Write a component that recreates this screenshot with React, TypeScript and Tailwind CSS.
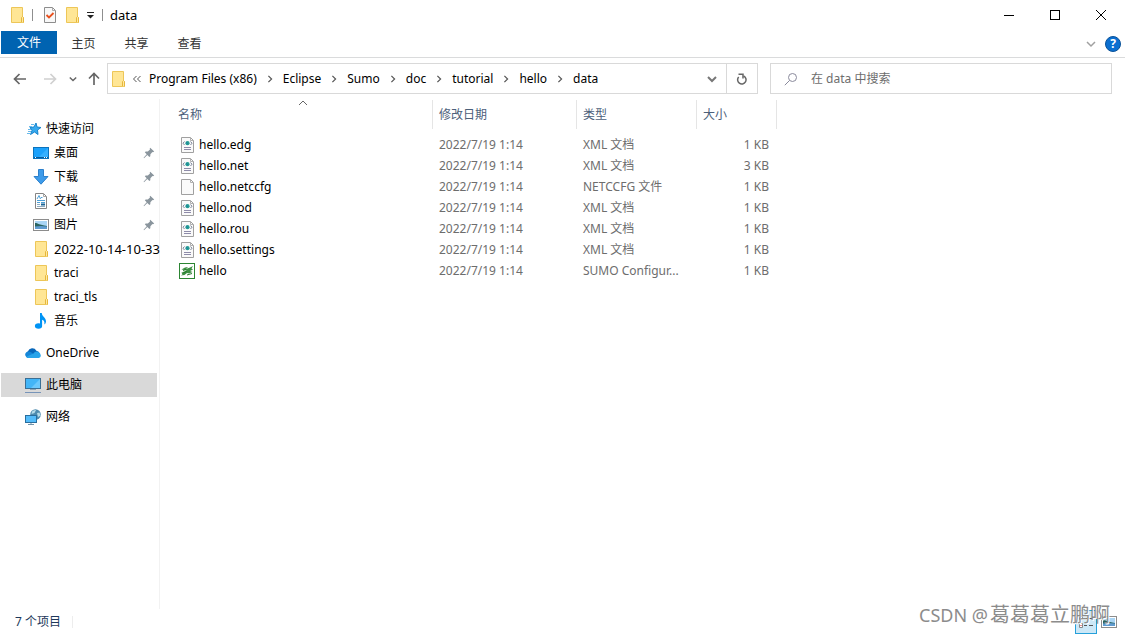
import type { ReactNode } from 'react'

interface FileItem {
  name: string
  icon: 'xml' | 'blank' | 'sumo'
  type: string
  size: string
}

interface NavItem {
  label: string
  icon: ReactNode
  pinned?: boolean
  wide?: boolean
}

const files: FileItem[] = [
  { name: 'hello.edg', icon: 'xml', type: 'XML 文档', size: '1 KB' },
  { name: 'hello.net', icon: 'xml', type: 'XML 文档', size: '3 KB' },
  { name: 'hello.netccfg', icon: 'blank', type: 'NETCCFG 文件', size: '1 KB' },
  { name: 'hello.nod', icon: 'xml', type: 'XML 文档', size: '1 KB' },
  { name: 'hello.rou', icon: 'xml', type: 'XML 文档', size: '1 KB' },
  { name: 'hello.settings', icon: 'xml', type: 'XML 文档', size: '1 KB' },
  { name: 'hello', icon: 'sumo', type: 'SUMO Configur...', size: '1 KB' }
]

const crumbs = ['Program Files (x86)', 'Eclipse', 'Sumo', 'doc', 'tutorial', 'hello', 'data']

function FolderIcon() {
  return (
    <svg width="16" height="16" viewBox="0 0 16 16" className="shrink-0">
      <path d="M2.5 .5H13.5V9.5L14.5 10.5V15.5H2.5Z" fill="#ffe695" stroke="#edc658" />
      <path d="M12.5 15V10.5L13.5 9.5L14.5 10.5V15.5" fill="#ffe9a2" stroke="#e6b73c" />
    </svg>
  )
}

function PropertiesIcon() {
  return (
    <svg width="14" height="16" viewBox="0 0 14 16">
      <path d="M1.5 .5H9.5L12.5 3.5V15.5H1.5Z" fill="#f8f8f8" stroke="#8d8d8d" />
      <path d="M9.5 .5V3.5H12.5" fill="none" stroke="#a9a9a9" />
      <path d="M3.5 8L6 10.5L10.5 6" fill="none" stroke="#e8501e" strokeWidth="1.8" />
    </svg>
  )
}

function StarIcon() {
  return (
    <svg width="16" height="16" viewBox="0 0 16 16" className="shrink-0">
      <path d="M10 2L11 6L15 6.5L11.5 9L12 13.5L8.5 11L4.5 13.5L6 9.5L4 6.5L8 6Z" fill="#36a9ee" stroke="#1784cd" />
      <path d="M5 3.5H8M3 5.5H6M2 8.5H5M2 10.5H5M1 12.5H4" stroke="#68b9ea" />
    </svg>
  )
}

function DesktopIcon() {
  return (
    <svg width="16" height="16" viewBox="0 0 16 16" className="shrink-0">
      <rect x=".5" y="2.5" width="15" height="11" fill="#1ba1fb" stroke="#0b73bd" />
      <path d="M15 3V12H6Z" fill="#35b0ff" />
      <path d="M1 12.5H15" stroke="#075b9b" />
      <path d="M2 12.5H3M11 12.5H12M13 12.5H14" stroke="#fff" />
    </svg>
  )
}

function DownloadIcon() {
  return (
    <svg width="16" height="16" viewBox="0 0 16 16" className="shrink-0">
      <path d="M5.5 .5H10.5V7.5H15L8 15.2L1 7.5H5.5Z" fill="#3d9bea" stroke="#2c80cc" />
    </svg>
  )
}

function DocumentIcon() {
  return (
    <svg width="16" height="16" viewBox="0 0 16 16" className="shrink-0">
      <path d="M2.5 .5H10.5L13.5 3.5V15.5H2.5Z" fill="#fff" stroke="#858585" />
      <path d="M10.5 .5V3.5H13.5" fill="none" stroke="#a5a5a5" />
      <path d="M4 6L6 2.5L7.5 6M8 4.5H9.5M4 7.5H12M8 9.5H12M4 9.5H7" fill="none" stroke="#4c9fd6" />
      <path d="M4 11.5H7M4 13.5H12" stroke="#8eabc0" />
      <path d="M8 11.5H12" stroke="#1d6495" strokeWidth="2" />
    </svg>
  )
}

function PictureIcon() {
  return (
    <svg width="16" height="16" viewBox="0 0 16 16" className="shrink-0">
      <rect x=".5" y="2.5" width="15" height="11" fill="#fff" stroke="#8c8c8c" />
      <rect x="2" y="4" width="12" height="8" fill="#a9d5f5" />
      <path d="M2 6C5 6 6 8 14 9V10H2Z" fill="#2b6460" />
      <path d="M2 9.5L8 9L14 9.5V12H2Z" fill="#5f9bd0" />
    </svg>
  )
}

function MusicIcon() {
  return (
    <svg width="16" height="16" viewBox="0 0 16 16" className="shrink-0">
      <ellipse cx="5.5" cy="13" rx="3.6" ry="2.7" fill="#0094f5" />
      <path d="M7 0H8.8C8.8 3.5 13.2 4.5 13 8.5C12.9 10 12.2 11 11.3 11.5C11.9 8.8 10.8 7.2 9.1 6.7V13H7Z" fill="#0094f5" />
    </svg>
  )
}

function OneDriveIcon() {
  return (
    <svg width="16" height="16" viewBox="0 0 16 16" className="shrink-0">
      <path d="M3.5 13A3.5 3.5 0 0 1 2.8 6.4A4.8 4.8 0 0 1 11.4 5.7A4 4 0 0 1 13 13Z" fill="#0867ba" />
      <path d="M3.5 13A3.5 3.5 0 0 1 .5 8.2C2 6 4.5 6.1 6 7.2L14 12.5Z" fill="#1586d8" />
      <path d="M1.2 11.8L8.5 8.4A4 4 0 0 1 15.8 10.2A2.8 2.8 0 0 1 13.2 13H3.5Q2 13 1.2 11.8Z" fill="#28a4ea" />
    </svg>
  )
}

function ComputerIcon() {
  return (
    <svg width="16" height="16" viewBox="0 0 16 16" className="shrink-0">
      <rect x=".5" y="1.5" width="15" height="10" fill="#43b5f7" stroke="#3a6f95" />
      <path d="M15 2V11H6Z" fill="#6cc8fc" />
      <path d="M5 12.5H11" stroke="#8fa5b7" />
      <path d="M0 15.5H16" stroke="#7794b8" />
    </svg>
  )
}

function NetworkIcon() {
  return (
    <svg width="16" height="16" viewBox="0 0 16 16" className="shrink-0">
      <circle cx="10.5" cy="5.5" r="5.3" fill="#4f8caf" />
      <path d="M7 2.5Q9 .5 11 1L9.5 4L6.5 5ZM12 4L14.5 3.5L15.5 6.5L13 8Z" fill="#b6dce9" />
      <rect x=".5" y="6.5" width="11" height="7" fill="#54bcfa" stroke="#296e9e" />
      <path d="M6 14V15M3 15.5H9" stroke="#7293aa" />
    </svg>
  )
}

function PinIcon() {
  return (
    <svg width="12" height="12" viewBox="0 0 12 12" className="shrink-0">
      <path d="M7.2 .8L11.2 4.6L10 5.3L9.4 5.1L7.4 7.3L7.3 9.2L6.4 10L4.3 7.9L1 11.2L.6 10.8L3.7 7.2L1.8 5.3L2.7 4.5L4.8 4.6L7 2.5L6.7 1.8Z" fill="#8a959d" />
    </svg>
  )
}

function FileIcon({ kind }: { kind: FileItem['icon'] }) {
  if (kind === 'sumo') {
    return (
      <svg width="16" height="16" viewBox="0 0 16 16" className="shrink-0">
        <rect x=".5" y=".5" width="15" height="15" fill="#fff" stroke="#2c8533" />
        <path d="M2.5 6.5L6 4.5L9 4L7 6L11 4.5L14 3L12.5 5.5L14 6.5L11 8L13.5 9L10 10.5L8 10L5.5 12L2 12.5L4.5 10.5L2 10L5 8.5L8 7.5Z" fill="#3d8f43" />
        <path d="M3 11L8 8M8 12L13 10.5M4 7.5L7 6.5" stroke="#267c2b" />
      </svg>
    )
  }
  return (
    <svg width="16" height="16" viewBox="0 0 16 16" className="shrink-0">
      <path d="M2.5 .5H11.5L14.5 3.5V15.5H2.5Z" fill="#fafafa" stroke="#a0a0a0" />
      <path d="M11.5 .5V3.5H14.5" fill="none" stroke="#b0b0b0" />
      {kind === 'xml' && (
        <>
          <path d="M5.5 4.5L4 6.2L5.5 8M11.5 4.5L13 6.2L11.5 8" fill="none" stroke="#7b8498" />
          <circle cx="8.5" cy="6.2" r="2.1" fill="#249e94" />
          <path d="M7.5 5.5L8.5 6.5" fill="none" stroke="#195bab" />
          <path d="M5 10.5H12M5 12.5H12" stroke="#8e8ba9" />
        </>
      )}
    </svg>
  )
}

function Chevron({ className, strokeWidth = 1.5 }: { className: string; strokeWidth?: number }) {
  return (
    <svg width="10" height="10" viewBox="0 0 10 10" className={className} fill="none" stroke="currentColor" strokeWidth={strokeWidth}>
      <path d="M1 3L5 7L9 3" />
    </svg>
  )
}

function ArrowIcon({ className }: { className: string }) {
  return (
    <svg width="14" height="14" viewBox="0 0 14 14" className={className} fill="none" stroke="currentColor" strokeWidth="1.7">
      <path d="M13 7H2M6.5 2L1.5 7L6.5 12" />
    </svg>
  )
}

const quickAccess: NavItem[] = [
  { label: '桌面', icon: <DesktopIcon />, pinned: true },
  { label: '下载', icon: <DownloadIcon />, pinned: true },
  { label: '文档', icon: <DocumentIcon />, pinned: true },
  { label: '图片', icon: <PictureIcon />, pinned: true },
  { label: '2022-10-14-10-33', icon: <FolderIcon />, wide: true },
  { label: 'traci', icon: <FolderIcon /> },
  { label: 'traci_tls', icon: <FolderIcon /> },
  { label: '音乐', icon: <MusicIcon /> }
]

function TitleBar() {
  return (
    <header className="flex h-[30px] items-center pl-[9px]">
      <FolderIcon />
      <span className="ml-[7px] mr-[10px] h-3 w-px bg-[#8f8f8f]" />
      <button aria-label="属性"><PropertiesIcon /></button>
      <button aria-label="新建文件夹" className="ml-[7px]"><FolderIcon /></button>
      <button aria-label="自定义快速访问工具栏" className="ml-[6px]">
        <svg width="9" height="8" viewBox="0 0 9 8">
          <path d="M1 1.5H8" stroke="#222" />
          <path d="M1 4H8L4.5 7.5Z" fill="#222" />
        </svg>
      </button>
      <span className="ml-[7px] h-3 w-px bg-[#8f8f8f]" />
      <h1 className="ml-[7px] text-[13px]">data</h1>
      <div className="ml-auto flex h-full">
        <button aria-label="最小化" className="flex w-[46px] items-center justify-center">
          <svg width="10" height="10"><path d="M0 5.5H10" stroke="#000" /></svg>
        </button>
        <button aria-label="最大化" className="flex w-[45px] items-center justify-center">
          <svg width="10" height="10"><rect x=".5" y=".5" width="9" height="9" fill="none" stroke="#000" /></svg>
        </button>
        <button aria-label="关闭" className="flex w-12 items-center justify-center">
          <svg width="10" height="10"><path d="M0 0L10 10M10 0L0 10" stroke="#000" /></svg>
        </button>
      </div>
    </header>
  )
}

function Ribbon() {
  return (
    <nav className="flex h-7 items-start border-b border-[#dadbdc] pl-px pt-px text-[#333]">
      <button className="h-[23px] w-14 bg-[#0063b1] text-white">文件</button>
      {['主页', '共享', '查看'].map((tab) => (
        <button key={tab} className="h-[26px] w-[53px]">{tab}</button>
      ))}
      <div className="ml-auto flex h-[26px] items-center gap-[9px] pr-1">
        <button aria-label="展开功能区"><Chevron className="text-[#a0a0a0]" /></button>
        <button aria-label="帮助" className="flex size-4 items-center justify-center rounded-full border border-[#0a5299] bg-[#0b6fd0] text-[12px] font-bold text-white">?</button>
      </div>
    </nav>
  )
}

function AddressBar() {
  return (
    <div className="flex h-[41px] items-center pr-[13px] text-[#666]">
      <button aria-label="后退" className="ml-[13px]"><ArrowIcon className="" /></button>
      <button aria-label="前进" className="ml-4"><ArrowIcon className="rotate-180 text-[#d0d0d0]" /></button>
      <button aria-label="最近位置" className="ml-3"><Chevron className="size-2" strokeWidth={1.8} /></button>
      <button aria-label="上移" className="ml-[10px]"><ArrowIcon className="rotate-90" /></button>
      <div className="ml-[6px] flex h-[31px] min-w-0 flex-1 items-center border border-[#d9d9d9] text-black">
        <span className="ml-[2px]"><FolderIcon /></span>
        <svg width="10" height="8" viewBox="0 0 10 8" className="mx-[6px] mr-[7px] shrink-0" fill="none" stroke="#555">
          <path d="M4.5 1L1.5 4L4.5 7M8.5 1L5.5 4L8.5 7" />
        </svg>
        <ol className="flex min-w-0 items-center whitespace-nowrap">
          {crumbs.map((crumb, i) => (
            <li key={crumb} className="flex items-center">
              {i > 0 && (
                <span className="flex w-[26px] justify-center">
                  <Chevron className="size-2 -rotate-90 text-[#555]" />
                </span>
              )}
              <button>{crumb}</button>
            </li>
          ))}
        </ol>
        <button aria-label="以前的位置" className="ml-auto mr-[9px]"><Chevron className="text-[#777]" strokeWidth={2} /></button>
        <button aria-label="刷新" className="flex h-full w-[31px] items-center justify-center border-l border-[#d9d9d9]">
          <svg width="12" height="12" viewBox="0 0 12 12" fill="none" stroke="#666" strokeWidth="1.5">
            <path d="M2.7 4A4.2 4.2 0 1 0 7.6 3" />
            <path d="M2.5 1.2H7V5.5" />
          </svg>
        </button>
      </div>
      <label className="ml-3 flex h-[31px] w-[342px] items-center border border-[#d9d9d9]">
        <svg width="14" height="14" viewBox="0 0 14 14" className="ml-[13px]" fill="none" stroke="#8a8a9c">
          <circle cx="8.5" cy="5.5" r="4" />
          <path d="M5.5 8.5L.8 13.2" />
        </svg>
        <input type="text" aria-label="搜索" placeholder="在 data 中搜索" className="ml-[13px] min-w-0 flex-1 outline-none placeholder:text-[#6d6d6d]" />
      </label>
    </div>
  )
}

function Sidebar() {
  return (
    <aside className="flex w-40 shrink-0 flex-col gap-2 border-r border-[#f2f2f2] pl-px pt-[18px]">
      <div>
        <a href="#quick" className="flex h-6 items-center pl-[25px]">
          <StarIcon />
          <span className="ml-1">快速访问</span>
        </a>
        <ul>
          {quickAccess.map((item) => (
            <li key={item.label}>
              <a href="#folder" className="flex h-6 items-center pl-8 pr-1">
                {item.icon}
                <span className={`ml-[5px] whitespace-nowrap ${item.wide ? 'text-[13px]' : ''}`}>{item.label}</span>
                {item.pinned && <span className="ml-auto"><PinIcon /></span>}
              </a>
            </li>
          ))}
        </ul>
      </div>
      <a href="#onedrive" className="flex h-6 items-center gap-[5px] pl-6"><OneDriveIcon />OneDrive</a>
      <a href="#pc" className="mr-[2px] flex h-6 items-center gap-[5px] bg-[#d9d9d9] pl-6"><ComputerIcon />此电脑</a>
      <a href="#network" className="flex h-6 items-center gap-[5px] pl-6"><NetworkIcon />网络</a>
    </aside>
  )
}

function FileTable() {
  return (
    <table className="w-[617px] table-fixed self-start text-left">
      <colgroup>
        <col className="w-[273px]" />
        <col className="w-36" />
        <col className="w-[120px]" />
        <col className="w-20" />
      </colgroup>
      <thead>
        <tr className="h-[35px] align-top text-[#4c607a]">
          {['名称', '修改日期', '类型', '大小'].map((title, i) => (
            <th key={title} className="p-0 font-normal">
              <div className={`relative mt-px flex h-[29px] items-center border-r border-[#e5e5e5] pt-px ${i === 0 ? 'pl-[18px]' : 'pl-[6px]'}`}>
                {title}
                {i === 0 && <Chevron className="absolute left-[138px] -top-[2px] rotate-180 text-[#666]" strokeWidth={1} />}
              </div>
            </th>
          ))}
        </tr>
      </thead>
      <tbody className="text-[#6d6d6d]">
        {files.map((file) => (
          <tr key={file.name} className="h-[21px]">
            <td className="p-0">
              <div className="flex items-center gap-1 pl-[19px] text-black">
                <FileIcon kind={file.icon} />
                {file.name}
              </div>
            </td>
            <td className="p-0 pl-[6px]">2022/7/19 1:14</td>
            <td className="whitespace-nowrap p-0 pl-[6px]">{file.type}</td>
            <td className="p-0 pr-2 text-right">{file.size}</td>
          </tr>
        ))}
      </tbody>
    </table>
  )
}

function StatusBar() {
  return (
    <footer className="relative flex h-[25px] items-center pl-[15px] pr-2 text-[#1e395b]">
      <span>7 个项目</span>
      <span className="ml-[11px] h-3 w-px bg-[#ededed]" />
      <div className="ml-auto flex items-center gap-1">
        <button aria-label="详细信息" className="flex h-6 w-[22px] items-center justify-center border border-[#26a0da] bg-[#cce8f7]">
          <svg width="16" height="14" viewBox="0 0 16 14" fill="none">
            <path d="M1.5 1.5H4.5V4.5H1.5ZM1.5 8.5H4.5V12.5H1.5Z" fill="#fff" stroke="#888" />
            <path d="M6 3.5H9M11 3.5H15M6 10.5H9M11 10.5H15" stroke="#555" />
            <path d="M2.5 10.5H3.5" stroke="#c22" />
          </svg>
        </button>
        <button aria-label="大图标"><PictureIcon /></button>
      </div>
      <div className="pointer-events-none absolute bottom-[5px] right-[15px] flex items-center whitespace-nowrap text-[20px] leading-7 text-[#8c8c8c] [text-shadow:1px_1px_0_#fff]">
        <span className="mr-[2px] text-[18px]">CSDN @</span>葛葛葛立鹏啊
      </div>
    </footer>
  )
}

export default function App() {
  return (
    <div className="flex min-h-screen flex-col overflow-hidden bg-white font-['Noto_Sans','Noto_Sans_CJK_SC',sans-serif] text-[12px] leading-4 text-black">
      <TitleBar />
      <Ribbon />
      <AddressBar />
      <main className="flex flex-1">
        <Sidebar />
        <FileTable />
      </main>
      <StatusBar />
    </div>
  )
}
